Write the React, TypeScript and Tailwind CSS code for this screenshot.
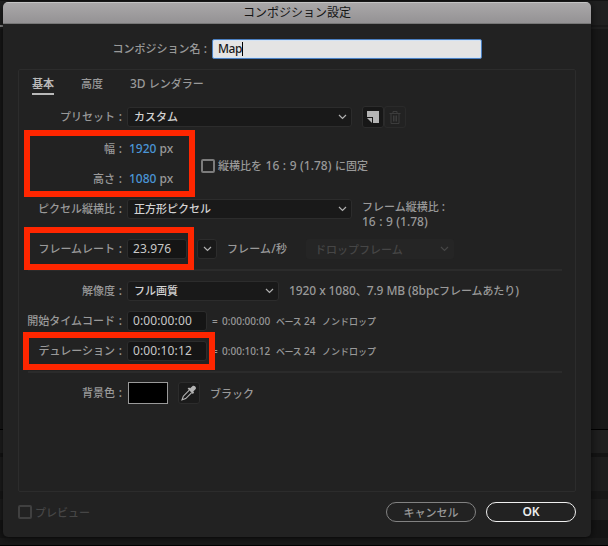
import type { ReactNode } from "react";
import { clsx } from "clsx";

// latin runs are set slightly larger than the kana around them
function Mixed({ children }: { children: string }) {
  return (
    <>
      {children.split(/([\x20-\x7e]+)/).map((part, i) =>
        i % 2 ? (
          <span key={i} className="text-[1.09em]">
            {part}
          </span>
        ) : (
          part
        )
      )}
    </>
  );
}

function Label({ children }: { children: string }) {
  return (
    <div className="w-[108px] shrink-0 pr-[5px] text-right [word-spacing:0.5px]">
      <Mixed>{children + " :"}</Mixed>
    </div>
  );
}

function Row({ label, className, children }: { label: string; className?: string; children: ReactNode }) {
  return (
    <div className={clsx("flex h-[30px] items-center", className)}>
      <Label>{label}</Label>
      {children}
    </div>
  );
}

function Chevron() {
  return (
    <svg className="shrink-0" width="9" height="6" viewBox="0 0 9 6" fill="none" stroke="currentColor" strokeWidth="1.2">
      <path d="M1 1l3.5 3.5L8 1" />
    </svg>
  );
}

function Select({ children, className }: { children: string; className: string }) {
  return (
    <div
      className={clsx(
        "flex h-5 shrink-0 items-center justify-between rounded-[3px] border border-[#2c2c2c] bg-[#191919] pr-[4px] pb-px pl-[6px] text-[#d2d2d2]",
        className
      )}
    >
      <span>{children}</span>
      <span className="text-[#b0b0b0]">
        <Chevron />
      </span>
    </div>
  );
}

function Field({ children, className }: { children: string; className: string }) {
  return (
    <div
      className={clsx(
        "flex h-5 shrink-0 items-center rounded-[3px] border border-[#2c2c2c] bg-[#151515] pl-[5px] text-[12px] font-normal tracking-[0.12px] text-[#c8c8c8]",
        className
      )}
    >
      {children}
    </div>
  );
}

function Divider() {
  return <div className="mx-[9px] mt-[5px] mb-[5px] h-[2px] w-[534px] bg-[#2b2b2b]" />;
}

function TimecodeNote({ time }: { time: string }) {
  return (
    <div className="ml-[5px] flex items-baseline text-[9px]">
      <span className="w-[10px] text-[10px]">=</span>
      <span className="w-[54px] text-[10px]">{time}</span>
      <span className="w-[28px] tracking-[-0.5px]">ベース</span>
      <span className="w-[18px] text-[10px]">24</span>
      <span>ノンドロップ</span>
    </div>
  );
}

function Backdrop() {
  return (
    <div className="absolute inset-0 flex flex-col bg-[#191919]">
      <div className="h-px bg-[#141414]" />
      <div className="h-[24px] bg-[#202020]" />
      <div className="h-[2px] w-[3px] bg-[#8c8c8c]" />
      <div className="h-[2px] bg-[#202020]" />
      <div className="h-[400px] bg-[#181818]" />
      <div className="h-px bg-black" />
      <div className="h-[23px] bg-[#1f1f1f]" />
      <div className="h-[4px] bg-[#141414]" />
      <div className="h-[34px] bg-[#1d1d1d]" />
      <div className="h-[8px] bg-[#171717]" />
      <div className="h-[21px] bg-[#1d1d1d]" />
      <div className="h-[18px] bg-[#151515]" />
      <div className="h-[7px] bg-[#1a1a1a]" />
      <div className="h-px bg-black" />
    </div>
  );
}

export default function App() {
  return (
    <div className="relative h-[546px] w-[608px] overflow-hidden font-['Noto_Sans','Noto_Sans_CJK_JP',sans-serif] text-[11px] leading-none font-medium whitespace-nowrap text-[#999]">
      <Backdrop />

      <div className="relative mt-[2px] ml-[3px] flex h-[535px] w-[588px] flex-col overflow-hidden rounded-[5px] bg-[#222222] shadow-[0_1px_8px_rgba(0,0,0,0.7)]">
        <div className="flex h-[22px] shrink-0 items-center justify-center border-t border-b border-t-[#c4c4c4] border-b-[#777] bg-linear-to-b from-[#aaa8a9] to-[#949294] text-[12px] font-normal text-[#151515]">
          コンポジション設定
        </div>

        <div className="mt-[15px] flex h-5 items-center">
          <div className="w-[209px] pr-[5px] text-right">
            <Mixed>コンポジション名 :</Mixed>
          </div>
          <div className="flex h-5 w-[270px] items-center rounded-[2px] border border-[#4b7fc0] bg-[#e4e4e4] pl-[5px] text-[12px] text-[#1a1a1a] shadow-[inset_0_0_0_1px_#d3e3f5]">
            <span className="tracking-[-0.4px]">Map</span>
            <span className="h-[14px] w-px bg-black" />
          </div>
        </div>

        <div className="relative mt-[10px] ml-[15px] h-[423px] w-[558px] rounded-[2px] border border-[#2c2c2c]">
          <div className="flex h-8 pt-[8px] pl-[13px]">
            <span className="mr-[27px] h-[17px] border-b-2 border-[#b9b9b9] font-bold text-[#b9b9b9]">基本</span>
            <span className="mr-[27px]">高度</span>
            <span>
              <Mixed>3D レンダラー</Mixed>
            </span>
          </div>

          <Row label="プリセット">
            <Select className="w-[225px]">カスタム</Select>
            <div className="ml-[10px] flex size-[22px] items-center justify-center rounded-[3px] border border-[#2c2c2c] bg-[#171717]">
              <svg width="12" height="12" viewBox="0 0 12 12" fill="#b4b4b4">
                <path d="M0 0h12v12H6V6H0z" />
                <path d="M0 7h5v5z" />
              </svg>
            </div>
            <div className="flex size-[22px] items-center justify-center rounded-[3px] border border-[#2a2a2a]">
              <svg width="12" height="13" viewBox="0 0 12 13" fill="none" stroke="#3c3c3c">
                <path d="M.5 2.5h11M4 2.5v-2h4v2M2 2.5v10h8v-10M4.5 4.5v6M6 4.5v6M7.5 4.5v6" />
              </svg>
            </div>
          </Row>

          <div className="mt-[2px] flex items-center">
            <div className="w-[182px]">
              <Row label="幅">
                <span className="ml-[2px] text-[12px]">
                  <span className="text-[#4a95d6]">1920</span> px
                </span>
              </Row>
              <Row label="高さ">
                <span className="ml-[2px] text-[12px]">
                  <span className="text-[#4a95d6]">1080</span> px
                </span>
              </Row>
            </div>
            <div className="mt-[4px] flex items-center">
              <span className="mr-[3px] size-[14px] rounded-[2px] border-2 border-[#7c7c7c]" />
              <span className="[word-spacing:0.45px]">
                <Mixed>縦横比を 16 : 9 (1.78) に固定</Mixed>
              </span>
            </div>
          </div>

          <Row label="ピクセル縦横比">
            <Select className="w-[225px]">正方形ピクセル</Select>
            <div className="mt-[10px] ml-[10px] leading-[15px]">
              <Mixed>フレーム縦横比 :</Mixed>
              <br />
              <span className="[word-spacing:0.4px]">
                <Mixed>16 : 9 (1.78)</Mixed>
              </span>
            </div>
          </Row>

          <Row label="フレームレート" className="mt-[10px]">
            <Field className="w-[60px]">23.976</Field>
            <div className="ml-[10px] flex size-5 items-center justify-center rounded-[3px] border border-[#2c2c2c] bg-[#191919] text-[#b0b0b0]">
              <Chevron />
            </div>
            <span className="ml-[10px] tracking-[0.12px]">
              <Mixed>フレーム/秒</Mixed>
            </span>
            <div className="ml-[19px] flex h-5 w-[148px] items-center justify-between rounded-[3px] bg-[#252525] pr-[5px] pl-[9px] text-[#464646]">
              ドロップフレーム
              <Chevron />
            </div>
          </Row>

          <Divider />

          <Row label="解像度">
            <Select className="w-[152px]">フル画質</Select>
            <span className="ml-[10px] tracking-[-0.08px]">
              <Mixed>1920 x 1080、7.9 MB (8bpcフレームあたり)</Mixed>
            </span>
          </Row>
          <Row label="開始タイムコード">
            <Field className="w-[80px]">0:00:00:00</Field>
            <TimecodeNote time="0:00:00:00" />
          </Row>
          <Row label="デュレーション">
            <Field className="w-[80px]">0:00:10:12</Field>
            <TimecodeNote time="0:00:10:12" />
          </Row>

          <Divider />

          <Row label="背景色">
            <div className="ml-px h-[22px] w-[40px] border border-[#9a9a9a] bg-black" />
            <div className="ml-[10px] flex size-[22px] items-center justify-center rounded-[3px] border border-[#2c2c2c] bg-[#1b1b1b]">
              <svg width="16" height="16" viewBox="0 0 16 16">
                <path d="M8.3 5.2L2.3 11.2 1 14.8l3.7-1.2 6-6" fill="none" stroke="#b4b4b4" strokeWidth="1.1" />
                <path
                  d="M6.6 3.6l1.4-1.2 1.2.9 2.1-2.1c1.9-1.5 4.8 1 3.2 3.1l-2.2 2.2.8 1.3-1.3 1.3z"
                  fill="#b4b4b4"
                />
              </svg>
            </div>
            <span className="ml-[10px]">ブラック</span>
          </Row>

          {/* callout frames */}
          <div className="absolute top-[60px] left-[5px] h-[67px] w-[171px] border-6 border-[#ff2600]" />
          <div className="absolute top-[157px] left-[5px] h-[43px] w-[170px] border-6 border-[#ff2600]" />
          <div className="absolute top-[262px] left-[4px] h-[38px] w-[192px] border-6 border-[#ff2600]" />
        </div>

        <div className="mt-[10px] mr-[15px] ml-[15px] flex h-5 items-center">
          <span className="mr-[3px] size-[14px] rounded-[2px] border-2 border-[#404040]" />
          <span className="text-[#464646]">プレビュー</span>
          <button className="ml-auto flex h-5 w-[90px] items-center justify-center rounded-full border border-[#828282] text-[#999]">
            キャンセル
          </button>
          <button className="ml-[10px] flex h-5 w-[90px] items-center justify-center rounded-full border border-[#f0f0f0] text-[12px] font-semibold text-[#ececec]">
            OK
          </button>
        </div>
      </div>
    </div>
  );
}
